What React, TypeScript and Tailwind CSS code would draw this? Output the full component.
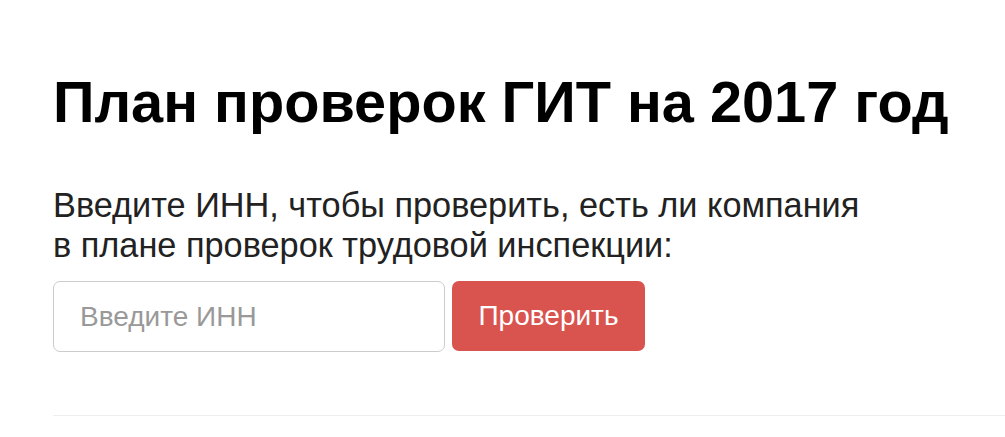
import React from 'react';

export default function App() {
  return (
    <div className="min-h-screen bg-white text-[#111] font-['Liberation_Sans',Arial,sans-serif]">
      <div className="pl-[53px] pt-[71px]">
        <h1 className="text-[57.7px] font-bold leading-[1.1] text-black">План проверок ГИТ на 2017 год</h1>

        <p className="mt-[51px] text-[34.3px] leading-[40px] text-[#222]">
          Введите ИНН, чтобы проверить, есть ли компания
          <br />
          в плане проверок трудовой инспекции:
        </p>

        <form className="mt-[16px] flex gap-[7px]" onSubmit={(e) => e.preventDefault()}>
          <input
            type="text"
            placeholder="Введите ИНН"
            className="w-[392px] h-[71px] rounded-[7px] border border-[#ccc] px-[26px] text-[28px] text-[#555] placeholder:text-[#999] outline-none"
          />
          <button
            type="submit"
            className="w-[193px] h-[70px] rounded-[7px] bg-[#d9534f] text-[28px] text-white"
          >
            Проверить
          </button>
        </form>

        <hr className="mt-[63px] border-0 border-t border-[#eee]" />
      </div>
    </div>
  );
}
